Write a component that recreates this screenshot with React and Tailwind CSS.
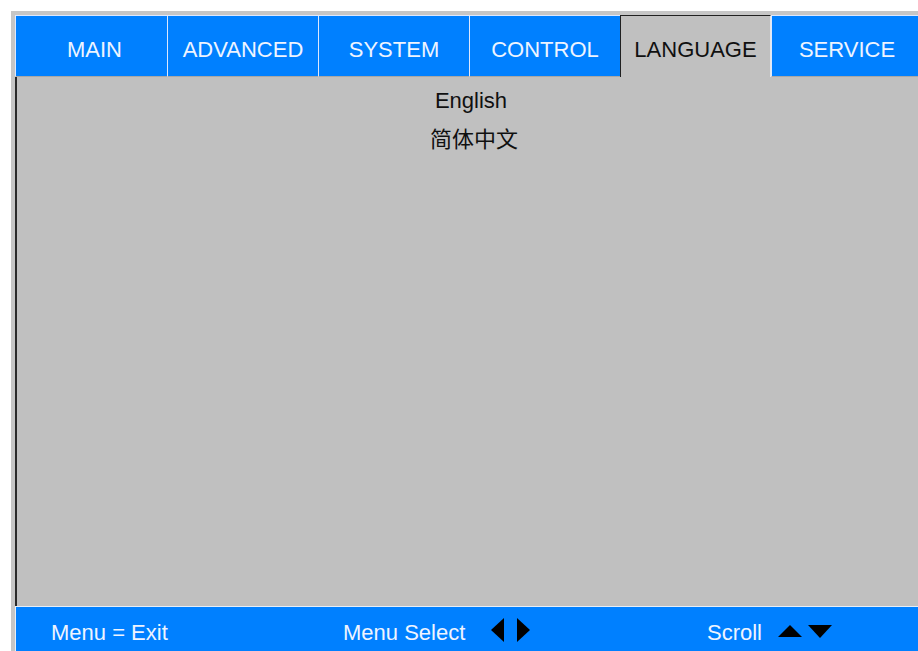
import React from 'react';

const tabs = ['MAIN', 'ADVANCED', 'SYSTEM', 'CONTROL', 'LANGUAGE', 'SERVICE'];

const font = { fontFamily: '"Liberation Sans", Arial, "Noto Sans CJK SC", sans-serif' };

const App = () => {
  return (
    <div className="w-[918px] h-[651px] overflow-hidden bg-white pt-[11px] pl-[11px]" style={font}>
      <div className="w-[914px] h-[640px] bg-[#c6c6c6] pt-[4px] pl-[4px] flex flex-col">
        <div className="flex h-[62px] shrink-0">
          {tabs.map((t, i) =>
            t === 'LANGUAGE' ? (
              <div
                key={t}
                className="w-[151px] h-full bg-[#c0c0c0] border-l border-t border-r border-l-[#202020] border-t-[#202020] border-r-[#e8e8e8] text-[#101010] text-[22px] leading-[22px] pt-[23px] text-center"
              >
                {t}
              </div>
            ) : (
              <div
                key={t}
                className={
                  (i === 0 ? 'w-[152px] pl-[6px] ' : 'w-[151px] ') +
                  'h-full bg-[#0080ff] border-l border-t border-[#dce8ff] border-b border-b-[#a8a8a8] text-[#eef4ff] text-[22px] leading-[22px] pt-[23px] text-center'
                }
              >
                {t}
              </div>
            )
          )}
        </div>
        <div className="flex-1 bg-[#c0c0c0] border-l-2 border-[#2a2a2a] pt-[4px] text-center text-[#101010] text-[22px] leading-[39px]">
          <div>English</div>
          <div style={{ fontFamily: '"Noto Sans CJK SC", sans-serif' }} className="text-[22px] leading-[35px] pl-[6px]">简体中文</div>
        </div>
        <div className="h-[45px] shrink-0 bg-[#0080ff] border-t border-l border-[#e6eef8] flex items-start pt-[15px] text-[#eef4ff] text-[22px] leading-[22px]">
          <div className="w-[327px] pl-[35px]">Menu = Exit</div>
          <div className="w-[364px] flex items-center">
            <span>Menu Select</span>
            <svg width="13" height="24" viewBox="0 0 13 24" className="ml-[26px] -mt-[6px]">
              <polygon points="13,0 13,24 0,12" fill="#000" />
            </svg>
            <svg width="13" height="24" viewBox="0 0 13 24" className="ml-[13px] -mt-[6px]">
              <polygon points="0,0 0,24 13,12" fill="#000" />
            </svg>
          </div>
          <div className="flex items-center">
            <span>Scroll</span>
            <svg width="24" height="12" viewBox="0 0 24 12" className="ml-[16px] -mt-[4px]">
              <polygon points="0,12 24,12 12,0" fill="#000" />
            </svg>
            <svg width="24" height="13" viewBox="0 0 24 13" className="ml-[6px] -mt-[4px]">
              <polygon points="0,0 24,0 12,13" fill="#000" />
            </svg>
          </div>
        </div>
      </div>
    </div>
  );
};

export default App;
